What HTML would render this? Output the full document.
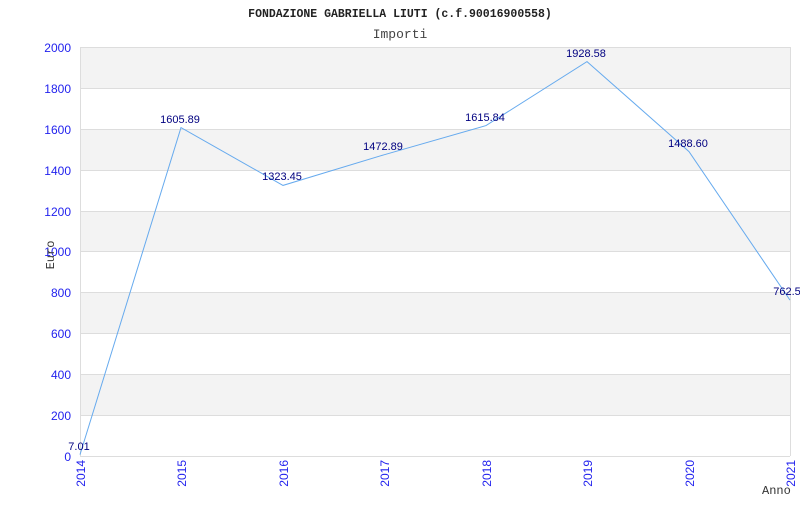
<!DOCTYPE html>
<html><head><style>
body{margin:0;background:#fff;width:800px;height:500px;overflow:hidden}
</style></head><body>
<svg width="800" height="500" xmlns="http://www.w3.org/2000/svg">
<text x="400" y="17" text-anchor="middle" font-family="Liberation Mono, monospace" font-size="11.5" font-weight="bold" fill="#222">FONDAZIONE GABRIELLA LIUTI (c.f.90016900558)</text>
<text x="400" y="38" text-anchor="middle" font-family="Liberation Mono, monospace" font-size="13" fill="#444">Importi</text>
<g fill="#f3f3f3">
<rect x="80" y="47" width="710" height="41"/>
<rect x="80" y="129" width="710" height="41"/>
<rect x="80" y="211" width="710" height="41"/>
<rect x="80" y="292" width="710" height="41"/>
<rect x="80" y="374" width="710" height="41"/>
</g>
<g stroke="#dddddd" stroke-width="1">
<line x1="80" x2="790" y1="47.5" y2="47.5"/><line x1="80" x2="790" y1="88.5" y2="88.5"/>
<line x1="80" x2="790" y1="129.5" y2="129.5"/><line x1="80" x2="790" y1="170.5" y2="170.5"/>
<line x1="80" x2="790" y1="211.5" y2="211.5"/><line x1="80" x2="790" y1="251.5" y2="251.5"/>
<line x1="80" x2="790" y1="292.5" y2="292.5"/><line x1="80" x2="790" y1="333.5" y2="333.5"/>
<line x1="80" x2="790" y1="374.5" y2="374.5"/><line x1="80" x2="790" y1="415.5" y2="415.5"/>
<line x1="80" x2="790" y1="456.5" y2="456.5"/>
<line x1="80.5" x2="80.5" y1="47" y2="456"/><line x1="790.5" x2="790.5" y1="47" y2="456"/>
</g>
<g font-family="Liberation Sans, sans-serif" font-size="12" fill="#2222ee" text-anchor="end">
<text x="71" y="52">2000</text><text x="71" y="93">1800</text><text x="71" y="134">1600</text>
<text x="71" y="175">1400</text><text x="71" y="216">1200</text><text x="71" y="256">1000</text>
<text x="71" y="297">800</text><text x="71" y="338">600</text><text x="71" y="379">400</text>
<text x="71" y="420">200</text><text x="71" y="461">0</text>
</g>
<g font-family="Liberation Sans, sans-serif" font-size="12" fill="#2222ee" text-anchor="end">
<text transform="translate(85,460) rotate(-90)">2014</text>
<text transform="translate(186,460) rotate(-90)">2015</text>
<text transform="translate(288,460) rotate(-90)">2016</text>
<text transform="translate(389,460) rotate(-90)">2017</text>
<text transform="translate(491,460) rotate(-90)">2018</text>
<text transform="translate(592,460) rotate(-90)">2019</text>
<text transform="translate(694,460) rotate(-90)">2020</text>
<text transform="translate(795,460) rotate(-90)">2021</text>
</g>
<text transform="translate(54,255) rotate(-90)" text-anchor="middle" font-family="Liberation Mono, monospace" font-size="12" fill="#333">Euro</text>
<text x="762" y="494" font-family="Liberation Mono, monospace" font-size="12" fill="#333">Anno</text>
<polyline fill="none" stroke="#66aaee" stroke-width="1" points="80,454.6 181,127.6 283,185.4 384,154.8 486,125.6 587,61.6 689,151.6 790,300.1"/>
<g font-family="Liberation Sans, sans-serif" font-size="11" fill="#000080" text-anchor="middle">
<text x="79" y="450">7.01</text>
<text x="180" y="123">1605.89</text>
<text x="282" y="180">1323.45</text>
<text x="383" y="150">1472.89</text>
<text x="485" y="121">1615.84</text>
<text x="586" y="57">1928.58</text>
<text x="688" y="147">1488.60</text>
<text x="787" y="295">762.5</text>
</g>
</svg>
</body></html>
